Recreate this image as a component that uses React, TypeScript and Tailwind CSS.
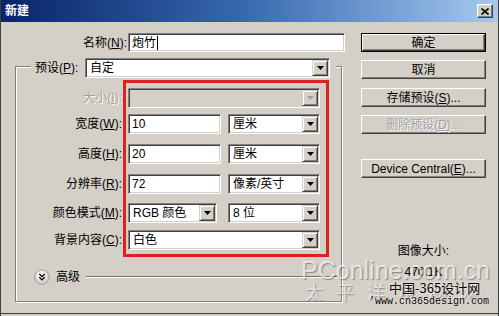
import { ReactNode } from "react";

// Windows classic style "new document" dialog
const sunken =
  "border border-t-[#808080] border-l-[#808080] border-b-white border-r-white shadow-[inset_1px_1px_0_#404040,inset_-1px_-1px_0_#d4d0c8]";
const raised =
  "bg-[#d4d0c8] border border-t-white border-l-white border-b-[#404040] border-r-[#404040] shadow-[inset_-1px_-1px_0_#808080]";

const ArrowBtn = ({ disabled = false }: { disabled?: boolean }) => (
  <div className="w-[16px] h-[16px] flex items-center justify-center bg-[#d4d0c8] border border-t-[#d4d0c8] border-l-[#d4d0c8] border-b-[#404040] border-r-[#404040] shadow-[inset_1px_1px_0_#fff,inset_-1px_-1px_0_#808080]">
    <svg width="7" height="4" viewBox="0 0 7 4">
      <path d="M0 0h7L3.5 4z" fill={disabled ? "#a0a0a0" : "#000"} />
    </svg>
  </div>
);

const Select = ({
  value,
  className = "",
  disabled = false,
}: {
  value: string;
  className?: string;
  disabled?: boolean;
}) => (
  <div
    className={`h-[20px] flex items-center justify-between p-[1px] ${sunken} ${
      disabled ? "bg-[#d4d0c8]" : "bg-white"
    } ${className}`}
  >
    <span className="pl-[3px] whitespace-nowrap">{value}</span>
    <ArrowBtn disabled={disabled} />
  </div>
);

const Field = ({ value, className = "" }: { value: string; className?: string }) => (
  <div className={`h-[20px] flex items-center bg-white ${sunken} ${className}`}>
    <span className="pl-[3px]">{value}</span>
  </div>
);

const Btn = ({
  children,
  def = false,
  disabled = false,
  className = "",
}: {
  children: ReactNode;
  def?: boolean;
  disabled?: boolean;
  className?: string;
}) => (
  <div className={`w-[125px] h-[19px] ${def ? "border border-black" : ""} ${className}`}>
    <div
      className={`h-full flex items-center justify-center ${raised} ${
        disabled ? "text-[#a0a0a0] [text-shadow:1px_1px_0_#fff]" : ""
      }`}
    >
      {children}
    </div>
  </div>
);

const Row = ({
  label,
  children,
  className = "",
  disabled = false,
}: {
  label: ReactNode;
  children: ReactNode;
  className?: string;
  disabled?: boolean;
}) => (
  <div className={`flex items-center h-[20px] ${className}`}>
    <div
      className={`w-[106px] text-right whitespace-nowrap ${
        disabled ? "text-[#a0a0a0] [text-shadow:1px_1px_0_#fff]" : ""
      }`}
    >
      {label}
    </div>
    <div className="ml-[6px] flex items-center">{children}</div>
  </div>
);

export default function App() {
  return (
    <div className="relative w-[499px] h-[316px] overflow-hidden bg-[#d4d0c8] text-[12px] leading-[16px] text-black font-['Liberation_Sans','Noto_Sans_CJK_SC',sans-serif] flex flex-col border-l border-r border-[#404040]">
      {/* title bar */}
      <div className="h-[22px] shrink-0 flex items-center justify-between pl-[4px] pr-[5px] bg-gradient-to-r from-[#0a246a] via-[#3a6ab0] to-[#a6caf0]">
        <span className="text-white font-bold">新建</span>
        <div className={`w-[16px] h-[14px] flex items-center justify-center ${raised}`}>
          <svg width="8" height="7" viewBox="0 0 8 7">
            <path d="M0.5 0.5l7 6M7.5 0.5l-7 6" stroke="#000" strokeWidth="1.6" />
          </svg>
        </div>
      </div>

      {/* body */}
      <div className="flex-1 flex">
        <div className="w-[349px] flex flex-col">
          <div className="mt-[11px] flex items-center h-[19px]">
            <div className="w-[126px] text-right">
              名称(<u>N</u>):
            </div>
            <div className={`ml-[1px] w-[217px] h-[19px] flex items-center bg-white ${sunken}`}>
              <span className="pl-[3px]">炮竹</span>
              <span className="w-[1px] h-[14px] bg-black ml-[1px]" />
            </div>
          </div>

          <fieldset className="ml-[14px] mt-[6px] w-[327px] min-w-0 border border-[#808080] shadow-[inset_1px_1px_0_#fff,1px_1px_0_#fff] pb-[16px]">
            <legend className="ml-[15px] h-[16px] pl-[4px] pr-[6px] bg-[#d4d0c8] overflow-visible">
              <div className="flex items-start">
                <div className="w-[50px] h-[20px] flex items-center whitespace-nowrap">
                  预设(<u>P</u>):
                </div>
                <Select value="自定" className="w-[245px]" />
              </div>
            </legend>

            <Row label={<>大小(<u>I</u>):</>} className="mt-[14px]" disabled>
              <Select value="" disabled className="w-[192px]" />
            </Row>
            <Row label={<>宽度(<u>W</u>):</>} className="mt-[6px]">
              <Field value="10" className="w-[93px]" />
              <Select value="厘米" className="ml-[7px] w-[92px]" />
            </Row>
            <Row label={<>高度(<u>H</u>):</>} className="mt-[10px]">
              <Field value="20" className="w-[93px]" />
              <Select value="厘米" className="ml-[7px] w-[92px]" />
            </Row>
            <Row label={<>分辨率(<u>R</u>):</>} className="mt-[10px]">
              <Field value="72" className="w-[93px]" />
              <Select value="像素/英寸" className="ml-[7px] w-[92px]" />
            </Row>
            <Row label={<>颜色模式(<u>M</u>):</>} className="mt-[9px]">
              <Select value="RGB 颜色" className="w-[89px]" />
              <Select value="8 位" className="ml-[11px] w-[92px]" />
            </Row>
            <Row label={<>背景内容(<u>C</u>):</>} className="mt-[7px]">
              <Select value="白色" className="w-[192px]" />
            </Row>

            <div className="mt-[19px] h-[16px] flex items-center">
              <svg width="16" height="16" viewBox="0 0 16 16" className="ml-[18px] shrink-0">
                <defs>
                  <radialGradient id="adv" cx="40%" cy="35%" r="70%">
                    <stop offset="0" stopColor="#ffffff" />
                    <stop offset="1" stopColor="#c8c6c0" />
                  </radialGradient>
                </defs>
                <circle cx="8" cy="8" r="7.2" fill="url(#adv)" stroke="#9a968e" strokeWidth="0.9" />
                <path d="M5.3 5l2.7 2.6 2.7-2.6M5.3 8.3l2.7 2.6 2.7-2.6" fill="none" stroke="#000" strokeWidth="1.3" />
              </svg>
              <span className="ml-[6px] shrink-0">高级</span>
              <hr className="ml-[6px] mr-[3px] flex-1 border-0 border-t border-t-[#707070] border-b border-b-white" />
            </div>
          </fieldset>
        </div>

        <div className="ml-[11px] w-[125px] flex flex-col">
          <Btn def className="mt-[11px]">确定</Btn>
          <Btn className="mt-[8px]">取消</Btn>
          <Btn className="mt-[9px]">
            存储预设(<u>S</u>)...
          </Btn>
          <Btn disabled className="mt-[8px]">
            删除预设(<u>D</u>)...
          </Btn>
          <Btn className="mt-[25px]">
            Device Central(<u>E</u>)...
          </Btn>
          <div className="mt-[65px] text-center">图像大小:</div>
          <div className="mt-[5px] text-center">470.1K</div>
        </div>
      </div>

      <div className="h-[1px] shrink-0 bg-[#404040]" />
      <div className="h-[2px] shrink-0" />

      {/* red annotation box */}
      <div className="absolute left-[122px] top-[80px] w-[206px] h-[177px] border-[3px] border-[#e0201c] pointer-events-none" />

      {/* watermark */}
      <div className="absolute left-[300px] top-[256px] pointer-events-none text-[25px] leading-[28px] text-white/70 [text-shadow:1px_1px_1px_rgba(0,0,0,0.35)] whitespace-nowrap">
        PConline.com.cn
      </div>
      <div className="absolute left-[304px] top-[281px] pointer-events-none text-[18px] leading-[20px] tracking-[13px] text-white/60 [text-shadow:1px_1px_1px_rgba(0,0,0,0.3)] whitespace-nowrap font-['Noto_Sans_CJK_SC',sans-serif]">
        太平洋电脑网
      </div>
      <div className="absolute left-[388px] top-[280px] pointer-events-none text-[13px] leading-[16px] whitespace-nowrap [text-shadow:0_0_2px_#fff] font-['Noto_Sans_CJK_SC',sans-serif]">
        中国-365设计网
      </div>
      <div className="absolute left-[368px] top-[296px] pointer-events-none text-[10px] leading-[12px] whitespace-nowrap [text-shadow:0_0_2px_#fff] font-['Liberation_Mono',monospace]">
        'www.cn365design.com
      </div>
    </div>
  );
}
